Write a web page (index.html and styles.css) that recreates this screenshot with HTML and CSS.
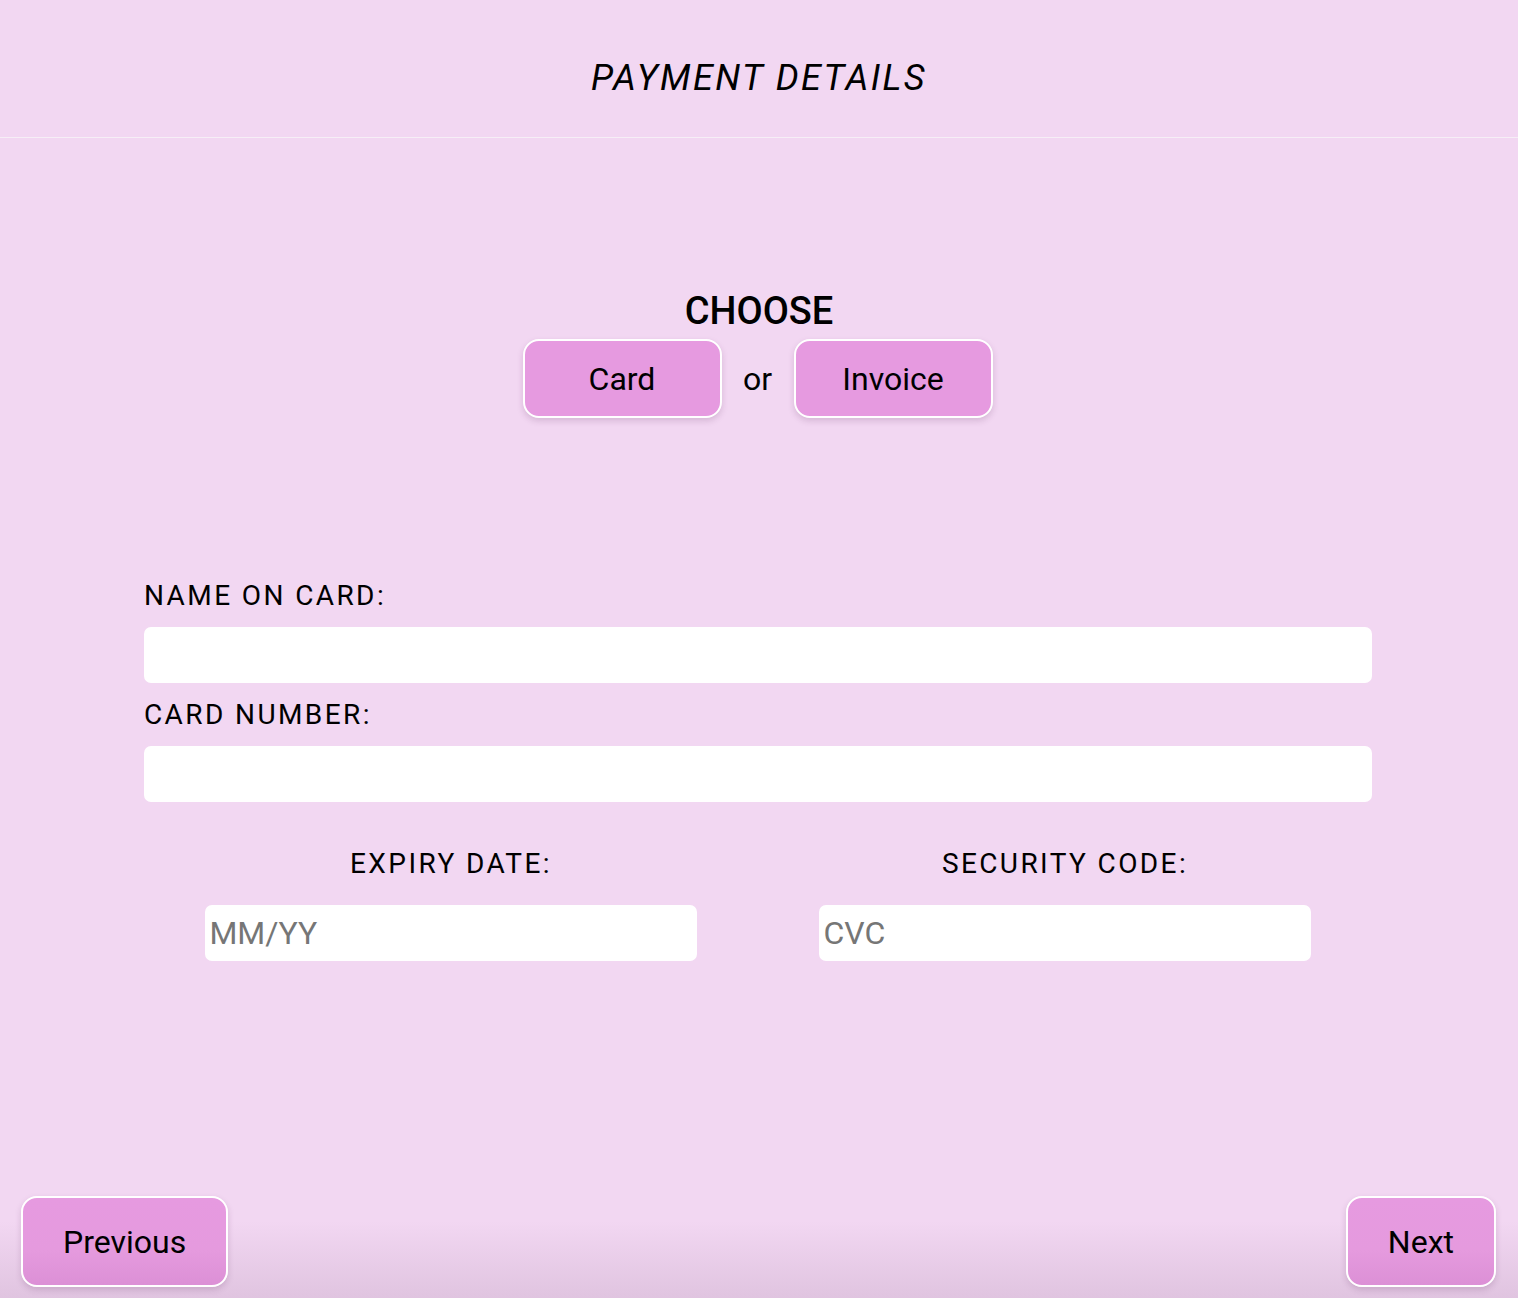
FILE: index.html
```html
<!DOCTYPE html>
<html lang="en">
<head>
<meta charset="utf-8">
<title>Payment details</title>
<link rel="stylesheet" href="styles.css">
</head>
<body>
<div class="page">
  <header class="header">
    <h1 class="title">PAYMENT DETAILS</h1>
  </header>
  <main class="main">
    <section class="choose">
      <h2 class="choose-title">CHOOSE</h2>
      <div class="choose-row">
        <button class="btn btn-choice" type="button">Card</button>
        <span class="or">or</span>
        <button class="btn btn-choice" type="button">Invoice</button>
      </div>
    </section>
    <form class="form">
      <label class="label" for="name">NAME ON CARD:</label>
      <input class="input" id="name" type="text">
      <label class="label" for="number">CARD NUMBER:</label>
      <input class="input" id="number" type="text">
      <div class="split">
        <div class="col">
          <label class="label label-center" for="exp">EXPIRY DATE:</label>
          <input class="input input-small" id="exp" type="text" placeholder="MM/YY">
        </div>
        <div class="col">
          <label class="label label-center" for="cvc">SECURITY CODE:</label>
          <input class="input input-small" id="cvc" type="text" placeholder="CVC">
        </div>
      </div>
    </form>
  </main>
  <footer class="footer">
    <button class="btn btn-nav" type="button">Previous</button>
    <button class="btn btn-nav" type="button">Next</button>
  </footer>
</div>
</body>
</html>
```
FILE: styles.css
```css
* { box-sizing: border-box; }
html, body { margin: 0; padding: 0; }
body {
  background: #f2d7f2;
  font-family: Roboto, "Liberation Sans", Arial, sans-serif;
  color: #000;
}
.page {
  min-height: 100vh;
  display: flex;
  flex-direction: column;
}
.header {
  height: 138px;
  border-bottom: 1px solid #f6eef6;
  display: flex;
  align-items: center;
  justify-content: center;
}
.title {
  margin: 0;
  padding-top: 18px;
  font-size: 36px;
  font-weight: 400;
  font-style: italic;
  letter-spacing: 2.4px;
}
.main {
  display: flex;
  flex-direction: column;
}
.choose {
  margin-top: 151px;
  display: flex;
  flex-direction: column;
  align-items: center;
}
.choose-title {
  margin: 0 0 6px;
  font-size: 38px;
  font-weight: 500;
  line-height: 44px;
}
.choose-row {
  display: flex;
  align-items: center;
  margin-right: 3px;
}
.or {
  font-size: 32px;
  width: 72px;
  text-align: center;
}
.btn {
  font-family: Roboto, "Liberation Sans", Arial, sans-serif;
  font-size: 32px;
  color: #000;
  background: #e69ae0;
  border: 2px solid #fff;
  border-radius: 16px;
  box-shadow: 0 3px 6px rgba(90, 40, 90, 0.18);
  cursor: pointer;
  line-height: 38px;
}
.btn-choice {
  width: 199px;
  height: 79px;
  padding: 0;
}
.form {
  width: 1228px;
  margin: 161px 0 0 144px;
  display: flex;
  flex-direction: column;
}
.label {
  display: block;
  font-size: 28px;
  line-height: 33px;
  letter-spacing: 2.4px;
  margin-bottom: 15px;
}
.input {
  display: block;
  width: 100%;
  height: 56px;
  border: none;
  border-radius: 7px;
  background: #fff;
  margin: 0 0 15px;
  padding: 1px 4px;
  font-family: Roboto, "Liberation Sans", Arial, sans-serif;
  font-size: 32px;
  color: #000;
  outline: none;
}
.input::placeholder { color: #767676; }
.split {
  display: flex;
  margin-top: 30px;
}
.col {
  flex: 1;
  display: flex;
  flex-direction: column;
  align-items: center;
}
.label-center {
  margin-bottom: 25px;
}
.input-small {
  width: 80%;
}
.footer {
  margin-top: auto;
  height: 118px;
  padding: 16px 22px 11px 21px;
  display: flex;
  justify-content: space-between;
  align-items: flex-start;
  background: linear-gradient(180deg, #f2d7f2 0%, #f2d7f2 35%, #e0c4e0 100%);
}
.btn-nav {
  height: 91px;
  padding: 0 40px;
  background: linear-gradient(180deg, #e69ae0 0%, #e59ade 60%, #dc90d6 100%);
}
```
